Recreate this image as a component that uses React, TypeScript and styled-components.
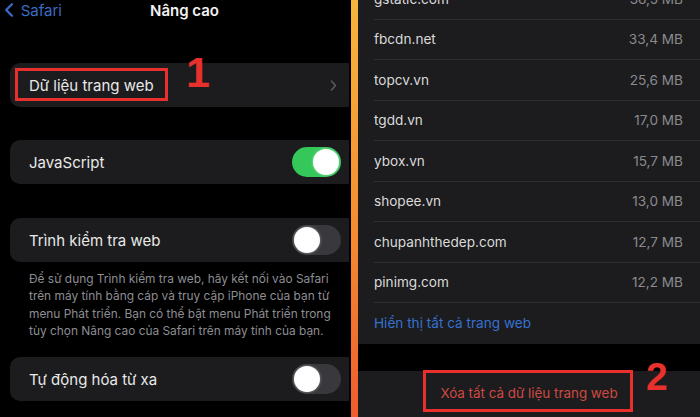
import React from "react";
import styled, { createGlobalStyle } from "styled-components";

const GlobalStyle = createGlobalStyle`
  html, body {
    margin: 0;
    padding: 0;
    background: #000;
  }
  body {
    font-family: Inter, "Noto Sans", sans-serif;
    -webkit-font-smoothing: antialiased;
  }
`;

const Screen = styled.div`
  position: relative;
  display: flex;
  width: 700px;
  height: 417px;
  overflow: hidden;
  background: #000;
`;

const LeftPane = styled.div`
  width: 349px;
  margin-right: 2px;
  display: flex;
  flex-direction: column;
`;

const Nav = styled.div`
  display: flex;
  align-items: center;
  height: 20px;
  padding-left: 4px;
`;

const BackLink = styled.div`
  display: flex;
  align-items: center;
  gap: 7px;
  color: #3a6cc4;
  font-size: 15px;
  width: 58px;
`;

const Title = styled.div`
  margin-left: 88px;
  color: #f2f2f2;
  font-size: 15px;
  font-weight: 600;
`;

const Cell = styled.div<{ $top: number }>`
  height: 44px;
  margin-top: ${(p) => p.$top}px;
  margin-left: 10px;
  border-radius: 10px 0 0 10px;
  background: #1c1c1e;
  display: flex;
  align-items: center;
  justify-content: space-between;
  padding: 0 8px 0 19px;
  font-size: 15px;
  color: #e9e9e9;
`;

const Chevron = styled.span`
  margin-right: 4px;
  display: flex;
`;

const Track = styled.div<{ $on: boolean }>`
  position: relative;
  width: 49px;
  height: 30px;
  border-radius: 15px;
  background: ${(p) => (p.$on ? "#34c759" : "#39393d")};
`;

const Knob = styled.div<{ $on: boolean }>`
  position: absolute;
  top: 2px;
  left: ${(p) => (p.$on ? "21px" : "2px")};
  width: 26px;
  height: 26px;
  border-radius: 50%;
  background: #fff;
  box-shadow: 0 0 3px rgba(255, 255, 255, 0.5);
`;

const Footer = styled.div`
  margin-left: 29px;
  padding-top: 8px;
  margin-bottom: 18px;
  color: #8d8d92;
  font-size: 11.9px;
  line-height: 17.3px;
  white-space: nowrap;
`;

const Divider = styled.div`
  width: 7px;
  background: linear-gradient(#f7b53c, #f58c30 55%, #ef5c2d);
`;

const RightPane = styled.div`
  flex: 1;
  display: flex;
  flex-direction: column;
`;

const List = styled.div`
  margin-top: -21px;
  background: #1c1c1e;
  padding-left: 16px;
`;

const Row = styled.div<{ $last?: boolean }>`
  height: 40.5px;
  box-sizing: border-box;
  display: flex;
  align-items: center;
  justify-content: space-between;
  padding-right: 17px;
  border-bottom: ${(p) => (p.$last ? "none" : "1px solid #2e2e30")};
  font-size: 13.6px;
`;

const Domain = styled.span`
  color: #dadada;
`;

const Size = styled.span`
  color: #8a8a8e;
`;

const ShowAll = styled.span`
  color: #3571d1;
`;

const DeleteCell = styled.div`
  margin-top: 27px;
  flex: 1;
  background: #1c1c1e;
  display: flex;
  align-items: center;
  justify-content: center;
  padding-bottom: 2px;
  font-size: 13.4px;
  color: #cf4a43;
`;

const Mark = styled.div<{ $x: number; $y: number; $w: number; $h: number }>`
  position: absolute;
  left: ${(p) => p.$x}px;
  top: ${(p) => p.$y}px;
  width: ${(p) => p.$w}px;
  height: ${(p) => p.$h}px;
  box-sizing: border-box;
  border: 3px solid #e8302c;
`;

const Step = styled.div<{ $x: number; $y: number; $size: number }>`
  position: absolute;
  left: ${(p) => p.$x}px;
  top: ${(p) => p.$y}px;
  font-family: "Liberation Sans Narrow", "Liberation Sans", sans-serif;
  font-weight: 700;
  font-size: ${(p) => p.$size}px;
  line-height: 1;
  color: #e8302c;
`;

const Toggle = ({ on }: { on: boolean }) => (
  <Track $on={on}>
    <Knob $on={on} />
  </Track>
);

const sites = [
  ["gstatic.com", "36,5 MB"],
  ["fbcdn.net", "33,4 MB"],
  ["topcv.vn", "25,6 MB"],
  ["tgdd.vn", "17,0 MB"],
  ["ybox.vn", "15,7 MB"],
  ["shopee.vn", "13,0 MB"],
  ["chupanhthedep.com", "12,7 MB"],
  ["pinimg.com", "12,2 MB"],
];

const footerLines = [
  "Để sử dụng Trình kiểm tra web, hãy kết nối vào Safari",
  "trên máy tính bằng cáp và truy cập iPhone của bạn từ",
  "menu Phát triển. Bạn có thể bật menu Phát triển trong",
  "tùy chọn Nâng cao của Safari trên máy tính của bạn.",
];

export default function App() {
  return (
    <>
      <GlobalStyle />
      <Screen>
        <LeftPane>
          <Nav>
            <BackLink>
              <svg width="11" height="16" viewBox="0 0 11 16">
                <path
                  d="M9 1.5 L2.5 8 L9 14.5"
                  fill="none"
                  stroke="#3a6cc4"
                  strokeWidth="2.6"
                  strokeLinecap="round"
                  strokeLinejoin="round"
                />
              </svg>
              Safari
            </BackLink>
            <Title>Nâng cao</Title>
          </Nav>
          <Cell $top={43}>
            Dữ liệu trang web
            <Chevron>
              <svg width="7" height="11" viewBox="0 0 7 11">
                <path
                  d="M1.5 1 L5.5 5.5 L1.5 10"
                  fill="none"
                  stroke="#5a5a5e"
                  strokeWidth="1.6"
                  strokeLinecap="round"
                  strokeLinejoin="round"
                />
              </svg>
            </Chevron>
          </Cell>
          <Cell $top={33}>
            JavaScript
            <Toggle on />
          </Cell>
          <Cell $top={34}>
            Trình kiểm tra web
            <Toggle on={false} />
          </Cell>
          <Footer>
            {footerLines.map((line) => (
              <div key={line}>{line}</div>
            ))}
          </Footer>
          <Cell $top={0}>
            Tự động hóa từ xa
            <Toggle on={false} />
          </Cell>
        </LeftPane>
        <Divider />
        <RightPane>
          <List>
            {sites.map(([domain, size]) => (
              <Row key={domain}>
                <Domain>{domain}</Domain>
                <Size>{size}</Size>
              </Row>
            ))}
            <Row $last>
              <ShowAll>Hiển thị tất cả trang web</ShowAll>
            </Row>
          </List>
          <DeleteCell>Xóa tất cả dữ liệu trang web</DeleteCell>
        </RightPane>

        <Mark $x={15} $y={68} $w={153} $h={33} />
        <Step $x={186} $y={51} $size={43}>
          1
        </Step>
        <Mark $x={423} $y={370} $w={210} $h={42} />
        <Step $x={646} $y={357} $size={39}>
          2
        </Step>
      </Screen>
    </>
  );
}
